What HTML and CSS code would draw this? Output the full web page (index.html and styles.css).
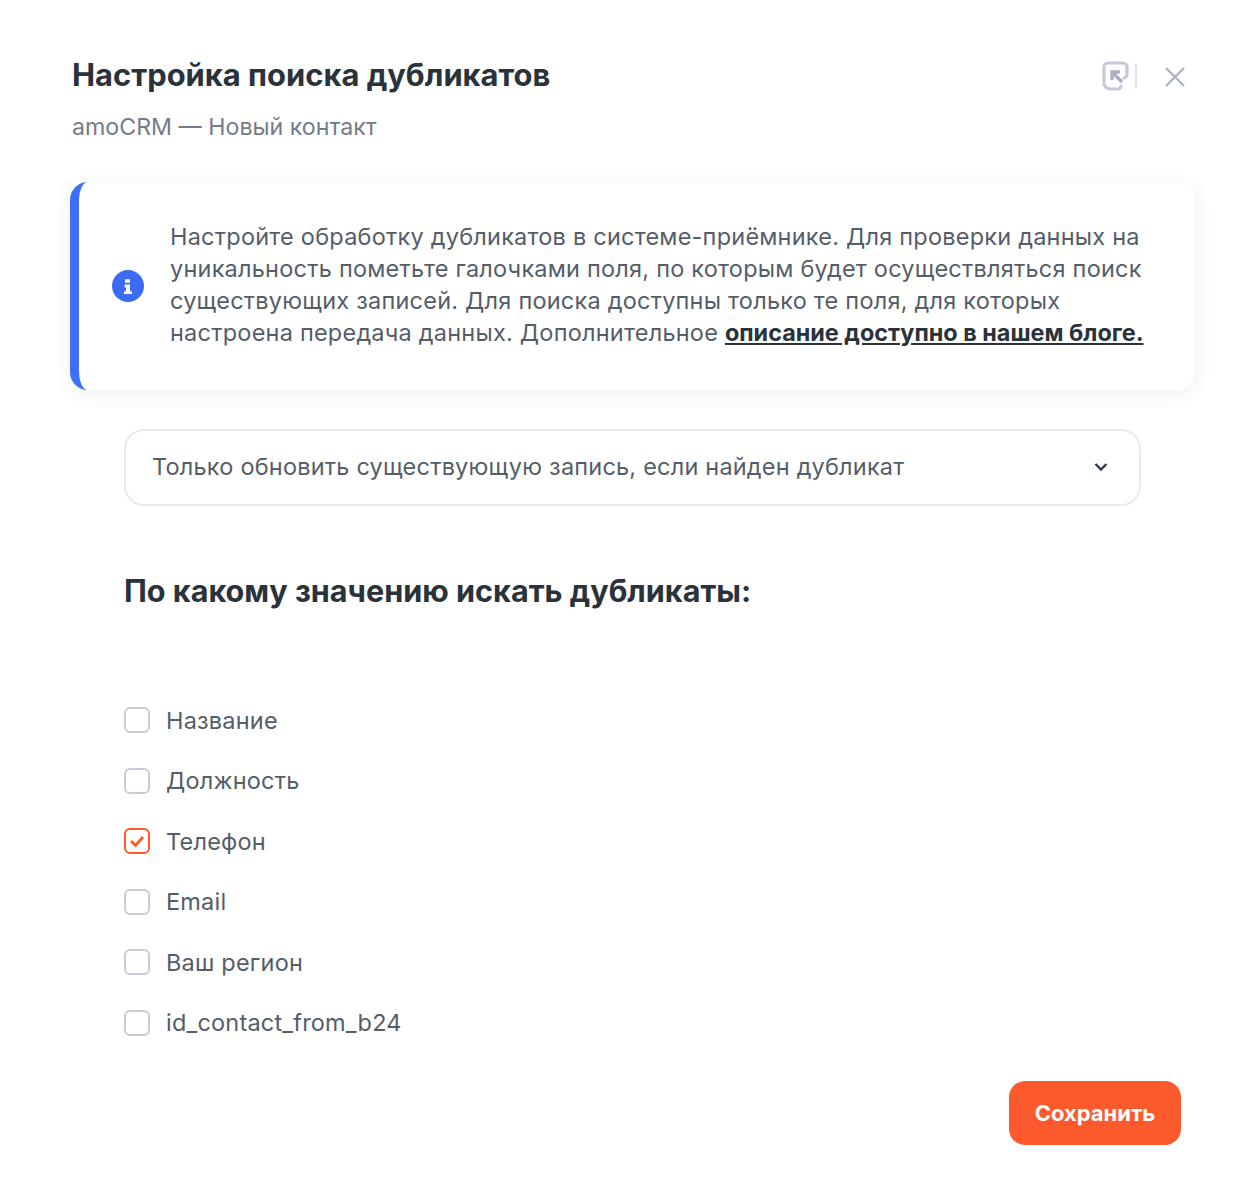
FILE: index.html
```html
<!DOCTYPE html>
<html lang="ru">
<head>
<meta charset="utf-8">
<title>Настройка поиска дубликатов</title>
<link rel="stylesheet" href="styles.css">
</head>
<body>
<main class="modal">
  <header class="head">
    <div class="head-text">
      <h1 class="title">Настройка поиска дубликатов</h1>
      <p class="subtitle">amoCRM — Новый контакт</p>
    </div>
    <div class="head-actions">
      <svg class="icon-open" width="36" height="32" viewBox="0 0 36 32" fill="none">
        <path d="M26 6.500V6a4 4 0 0 0-4-4H7a4 4 0 0 0-4 4v16a6 6 0 0 0 6 6h8a3 3 0 0 0 3-3" stroke="#c6cad8" stroke-width="3.200" stroke-linecap="round"/>
        <path d="M26 6.500V13a4 4 0 0 1-3 4" stroke="#c6cad8" stroke-width="3.200" stroke-linecap="round"/>
        <path d="M21 21 12 12M11 19v-8h8" stroke="#aab0c1" stroke-width="3.400"/>
        <path d="M35 3v24" stroke="#dcdfe8" stroke-width="1.600"/>
      </svg>
      <svg class="icon-close" width="22" height="22" viewBox="0 0 22 22" fill="none">
        <path d="M2 2l18 18M20 2 2 20" stroke="#aeb3c2" stroke-width="2.400"/>
      </svg>
    </div>
  </header>

  <section class="notice">
    <svg class="notice-icon" width="32" height="32" viewBox="0 0 32 32">
      <circle cx="16" cy="16" r="16" fill="#3d6bf5"/>
      <path d="M13 9.200h5v3.600h-5zM12.600 14.600H18v6.600h2v2.800h-8v-2.800h2v-3.800h-1.400z" fill="#fff"/>
    </svg>
    <p class="notice-text">Настройте обработку дубликатов в системе-приёмнике. Для проверки данных на уникальность пометьте галочками поля, по которым будет осуществляться поиск существующих записей. Для поиска доступны только те поля, для которых настроена передача данных. Дополнительное <a class="notice-link" href="#">описание доступно в нашем блоге.</a></p>
  </section>

  <div class="body">
    <div class="select">
      <span>Только обновить существующую запись, если найден дубликат</span>
      <svg width="14" height="10" viewBox="0 0 14 10" fill="none"><path d="M1.500 2l5.500 5.500L12.500 2" stroke="#2f3a48" stroke-width="2.400"/></svg>
    </div>

    <h2 class="section-title">По какому значению искать дубликаты:</h2>

    <ul class="options">
      <li class="option"><span class="box"></span>Название</li>
      <li class="option"><span class="box"></span>Должность</li>
      <li class="option"><span class="box checked"><svg width="18" height="14" viewBox="0 0 18 14" fill="none"><path d="M3 7l4.500 4.500L15 3" stroke="#fc5a2c" stroke-width="2.800"/></svg></span>Телефон</li>
      <li class="option"><span class="box"></span>Email</li>
      <li class="option"><span class="box"></span>Ваш регион</li>
      <li class="option"><span class="box"></span>id_contact_from_b24</li>
    </ul>
  </div>

  <footer class="foot">
    <button class="save" type="button">Сохранить</button>
  </footer>
</main>
</body>
</html>
```

FILE: styles.css
```css
* { box-sizing: border-box; }
html, body { margin: 0; background: #fff; }
body {
  width: 1260px;
  height: 1194px;
  overflow: hidden;
  font-family: Inter, "Noto Sans", sans-serif;
  color: #2c3641;
}
.modal { padding: 54px 65px 0 70px; }
.head { display: flex; justify-content: space-between; align-items: flex-start; padding-left: 2px; }
.title {
  margin: 0;
  font-size: 30.900px;
  line-height: 42px;
  font-weight: 700;
  color: #2a323a;
}
.subtitle {
  margin: 16px 0 0;
  font-size: 23.200px;
  line-height: 30px;
  color: #747c87;
}
.head-actions { display: flex; align-items: center; gap: 27px; margin: 7px 9px 0 0; }
.notice {
  margin-top: 40px;
  height: 208px;
  display: flex;
  align-items: center;
  gap: 26px;
  padding: 0 30px 0 33px;
  background: #fff;
  border-left: 9px solid #3d6ffb;
  border-radius: 18px;
  box-shadow: 0 4px 20px rgba(40, 50, 80, .08);
}
.notice-icon { flex: none; }
.notice-text {
  margin: 0;
  padding-bottom: 2px;
  font-size: 23.500px;
  letter-spacing: .22px;
  line-height: 32px;
  color: #555d68;
}
.notice-link {
  color: #2a323a;
  font-size: 23.400px;
  font-weight: 700;
  letter-spacing: 0;
  text-decoration: underline;
}
.body { padding: 0 54px; }
.select {
  margin-top: 39px;
  height: 77px;
  display: flex;
  align-items: center;
  justify-content: space-between;
  padding: 0 31px 2px 26px;
  border: 2px solid #e9eaf0;
  border-radius: 20px;
  font-size: 23.500px;
  letter-spacing: .2px;
  color: #555d68;
}
.section-title {
  margin: 64px 0 0;
  font-size: 30.600px;
  line-height: 42px;
  font-weight: 700;
  color: #2a323a;
}
.options { list-style: none; margin: 78px 0 0; padding: 0; }
.option {
  display: flex;
  align-items: center;
  gap: 16px;
  height: 60.500px;
  font-size: 23.500px;
  letter-spacing: .2px;
  color: #555d68;
}
.box {
  flex: none;
  width: 26px;
  height: 26px;
  display: flex;
  align-items: center;
  justify-content: center;
  border: 2.500px solid #c8ccd9;
  border-radius: 6px;
}
.box.checked { border-color: #fc5a2c; }
.foot { display: flex; justify-content: flex-end; padding: 28px 14px 0 0; }
.save {
  width: 172px;
  height: 64px;
  border: 0;
  border-radius: 16px;
  background: #fc5a2c;
  color: #fff;
  font: 700 22px Inter, sans-serif;
}
```
